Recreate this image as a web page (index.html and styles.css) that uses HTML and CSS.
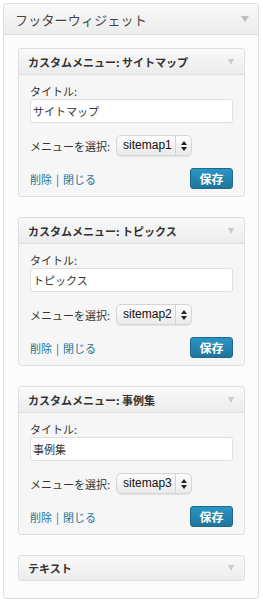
FILE: index.html
```html
<!DOCTYPE html>
<html lang="ja">
<head>
<meta charset="utf-8">
<link rel="stylesheet" href="styles.css">
</head>
<body>
<div class="sidebar">
  <div class="sidebar-head">
    <span class="sidebar-title">フッターウィジェット</span>
    <span class="arrow"></span>
  </div>
  <div class="sidebar-body">
    <div class="widget">
      <div class="widget-head"><span class="widget-title">カスタムメニュー: サイトマップ</span><span class="arrow small"></span></div>
      <div class="widget-body">
        <div class="label">タイトル:</div>
        <div class="input">サイトマップ</div>
        <div class="row">
          <span class="label">メニューを選択:</span>
          <div class="select"><span class="select-text">sitemap1</span><span class="select-btn"><svg width="6" height="10" viewBox="0 0 6 10"><path d="M3 0L6 4H0Z M3 10L6 6H0Z" fill="#222"/></svg></span></div>
        </div>
        <div class="actions">
          <span class="links"><a>削除</a><span class="sep">|</span><a>閉じる</a></span>
          <span class="button">保存</span>
        </div>
      </div>
    </div>
    <div class="widget">
      <div class="widget-head"><span class="widget-title">カスタムメニュー: トピックス</span><span class="arrow small"></span></div>
      <div class="widget-body">
        <div class="label">タイトル:</div>
        <div class="input">トピックス</div>
        <div class="row">
          <span class="label">メニューを選択:</span>
          <div class="select"><span class="select-text">sitemap2</span><span class="select-btn"><svg width="6" height="10" viewBox="0 0 6 10"><path d="M3 0L6 4H0Z M3 10L6 6H0Z" fill="#222"/></svg></span></div>
        </div>
        <div class="actions">
          <span class="links"><a>削除</a><span class="sep">|</span><a>閉じる</a></span>
          <span class="button">保存</span>
        </div>
      </div>
    </div>
    <div class="widget">
      <div class="widget-head"><span class="widget-title">カスタムメニュー: 事例集</span><span class="arrow small"></span></div>
      <div class="widget-body">
        <div class="label">タイトル:</div>
        <div class="input">事例集</div>
        <div class="row">
          <span class="label">メニューを選択:</span>
          <div class="select"><span class="select-text">sitemap3</span><span class="select-btn"><svg width="6" height="10" viewBox="0 0 6 10"><path d="M3 0L6 4H0Z M3 10L6 6H0Z" fill="#222"/></svg></span></div>
        </div>
        <div class="actions">
          <span class="links"><a>削除</a><span class="sep">|</span><a>閉じる</a></span>
          <span class="button">保存</span>
        </div>
      </div>
    </div>
    <div class="widget">
      <div class="widget-head last"><span class="widget-title">テキスト</span><span class="arrow small"></span></div>
    </div>
  </div>
</div>
</body>
</html>
```
FILE: styles.css
```css
* { box-sizing: border-box; }
html, body { margin: 0; padding: 0; background: #fff; }
body {
  font-family: "Noto Sans CJK JP", "Liberation Sans", sans-serif;
  width: 263px;
  height: 604px;
  padding: 3px 4px 0 3px;
}
.sidebar {
  border: 1px solid #dfdfdf;
  border-radius: 3px;
  background: #fcfcfc;
  height: 596px;
}
.sidebar-head {
  height: 31px;
  display: flex;
  align-items: center;
  justify-content: space-between;
  padding: 0 9px 0 11px;
  background: linear-gradient(#f9f9f9, #ececec);
  border-bottom: 1px solid #dfdfdf;
  border-radius: 3px 3px 0 0;
}
.sidebar-title {
  font-size: 13px;
  color: #464646;
  letter-spacing: 0.2px;
}
.arrow {
  width: 0; height: 0;
  border-left: 4px solid transparent;
  border-right: 4px solid transparent;
  border-top: 6px solid #bdbdbd;
}
.sidebar-body {
  padding: 13px 13px 0 14px;
  display: flex;
  flex-direction: column;
  gap: 20px;
}
.widget {
  border: 1px solid #dfdfdf;
  border-radius: 3px;
  background: #f6f6f6;
}
.widget-head {
  height: 25px;
  display: flex;
  align-items: center;
  justify-content: space-between;
  padding: 0 10px 0 9px;
  background: linear-gradient(#f9f9f9, #ececec);
  border-radius: 3px 3px 0 0;
}
.widget-head.last {
  height: 24px;
  border-radius: 3px;
}
.widget-title {
  font-size: 11px;
  font-weight: bold;
  color: #333;
}
.arrow.small {
  border-left-width: 3.5px;
  border-right-width: 3.5px;
  border-top: 6px solid #c9c9c9;
}
.widget-body {
  border-top: 1px solid #dfdfdf;
  padding: 8px 11px 7px 11px;
  display: flex;
  flex-direction: column;
}
.label {
  font-size: 11px;
  color: #333;
  line-height: 16px;
}
.input {
  height: 24px;
  border: 1px solid #dfdfdf;
  border-radius: 3px;
  background: #fff;
  font-size: 11px;
  line-height: 22px;
  padding: 0 2px;
  color: #333;
}
.row {
  margin-top: 12px;
  height: 21px;
  display: flex;
  align-items: center;
  gap: 6px;
}
.select {
  display: flex;
  height: 21px;
  width: 76px;
  border: 1px solid #d5d5d5;
  border-radius: 5px;
  background: linear-gradient(#fdfdfd, #eaeaea);
  box-shadow: 0 1px 1px rgba(0,0,0,0.08);
}
.select-text {
  flex: 1;
  font-family: "Liberation Sans", sans-serif;
  font-size: 12px;
  color: #111;
  line-height: 19px;
  padding-left: 6px;
}
.select-btn {
  width: 16px;
  border-left: 1px solid #d5d5d5;
  display: flex;
  align-items: center;
  justify-content: center;
}
.actions {
  margin-top: 12px;
  height: 21px;
  display: flex;
  align-items: center;
  justify-content: space-between;
}
.links {
  font-size: 11px;
  color: #21759b;
  display: flex;
  align-items: center;
}
.links a { color: #21759b; }
.sep { margin: 0 4px; }
.button {
  width: 43px;
  height: 21px;
  border: 1px solid #1e6a8d;
  border-radius: 3px;
  background: linear-gradient(#2a95c5, #21759b);
  color: #fff;
  font-size: 12px;
  font-weight: bold;
  display: flex;
  align-items: center;
  justify-content: center;
}
```
